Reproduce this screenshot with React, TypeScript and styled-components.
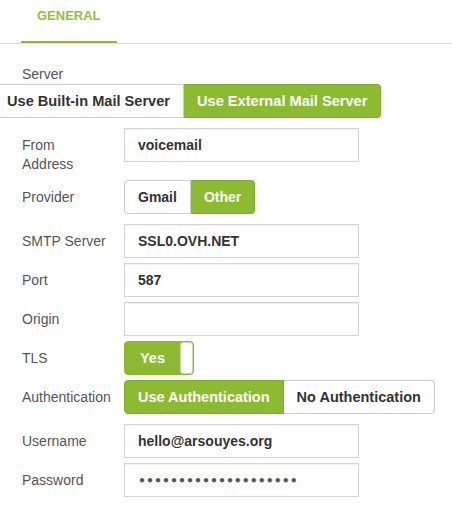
import React from "react";
import styled, { createGlobalStyle } from "styled-components";

const GREEN = "#8cbb32";
const GREEN_BORDER = "#80ad2b";

const GlobalStyle = createGlobalStyle`
  html, body {
    margin: 0;
    padding: 0;
    background: #ffffff;
    font-family: "Liberation Sans", Arial, sans-serif;
  }
  * {
    box-sizing: border-box;
  }
`;

const TabBar = styled.div`
  display: flex;
  padding-left: 21px;
  border-bottom: 1px solid #dddddd;
`;

const Tab = styled.div`
  padding: 8px 16px 17px;
  line-height: 16px;
  font-size: 13px;
  font-weight: bold;
  color: #8fc13a;
  border-bottom: 2px solid ${GREEN};
`;

const Form = styled.div`
  padding-left: 22px;
  display: flex;
  flex-direction: column;
`;

const SectionLabel = styled.div`
  margin-top: 21px;
  line-height: 19px;
  font-size: 14px;
  color: #555555;
`;

const Row = styled.div<{ $after?: number }>`
  display: grid;
  grid-template-columns: 102px 1fr;
  align-items: start;
  margin-bottom: ${(p) => p.$after ?? 5}px;
`;

const Label = styled.div`
  padding: 8px 0 1px;
  line-height: 19px;
  font-size: 14px;
  color: #555555;
`;

const Input = styled.input`
  width: 235px;
  height: 34px;
  padding: 0 13px;
  border: 1px solid #d4d4d4;
  border-radius: 0;
  box-shadow: inset 0 1px 1px rgba(0, 0, 0, 0.06);
  font-family: "Liberation Sans", Arial, sans-serif;
  font-size: 14px;
  font-weight: bold;
  color: #333333;
  outline: none;

  &[type="password"] {
    font-family: "DejaVu Sans", sans-serif;
    font-size: 12.5px;
    letter-spacing: 0;
    color: #555555;
  }
`;

const Group = styled.div<{ $shift?: number }>`
  display: flex;
  margin-left: ${(p) => p.$shift ?? 0}px;
  margin-bottom: ${(p) => (p.$shift !== undefined ? 10 : 0)}px;
`;

const Segment = styled.button<{ $active?: boolean; $size?: number }>`
  height: 34px;
  padding: 0 13px;
  font-family: "Liberation Sans", Arial, sans-serif;
  font-size: ${(p) => p.$size ?? 14.5}px;
  font-weight: bold;
  white-space: nowrap;
  cursor: pointer;
  background: ${(p) => (p.$active ? GREEN : "#ffffff")};
  color: ${(p) => (p.$active ? "#ffffff" : "#333333")};
  border: 1px solid ${(p) => (p.$active ? GREEN_BORDER : "#cccccc")};
  border-radius: 0;

  &:first-child {
    border-radius: 4px 0 0 4px;
  }
  &:last-child {
    border-radius: 0 4px 4px 0;
  }
  & + & {
    border-left: none;
  }
`;

const Switch = styled.div`
  display: flex;
  width: 70px;
  height: 34px;
  border: 1px solid ${GREEN};
  border-radius: 4px;
  overflow: hidden;
  background: ${GREEN};
`;

const SwitchLabel = styled.span`
  flex: 1;
  display: flex;
  align-items: center;
  justify-content: center;
  font-size: 14.5px;
  font-weight: bold;
  color: #ffffff;
`;

const Knob = styled.span`
  width: 13px;
  background: #ffffff;
  border: 1px solid #c9dca6;
  border-radius: 3px;
`;

const fields: { label: React.ReactNode; value: string; type?: string }[] = [
  { label: "SMTP Server", value: "SSL0.OVH.NET" },
  { label: "Port", value: "587" },
  { label: "Origin", value: "" },
];

export default function App() {
  return (
    <>
      <GlobalStyle />
      <TabBar>
        <Tab>GENERAL</Tab>
      </TabBar>
      <Form>
        <SectionLabel>Server</SectionLabel>
        <Group $shift={-29}>
          <Segment $size={14.6}>Use Built-in Mail Server</Segment>
          <Segment $size={14.6} $active>
            Use External Mail Server
          </Segment>
        </Group>

        <Row>
          <Label>
            From
            <br />
            Address
          </Label>
          <Input readOnly value="voicemail" />
        </Row>

        <Row $after={10}>
          <Label>Provider</Label>
          <Group>
            <Segment $size={14}>Gmail</Segment>
            <Segment $size={14} $active>
              Other
            </Segment>
          </Group>
        </Row>

        {fields.map((f) => (
          <Row key={f.value + String(f.label)}>
            <Label>{f.label}</Label>
            <Input readOnly value={f.value} />
          </Row>
        ))}

        <Row>
          <Label>TLS</Label>
          <Switch>
            <SwitchLabel>Yes</SwitchLabel>
            <Knob />
          </Switch>
        </Row>

        <Row $after={10}>
          <Label>Authentication</Label>
          <Group>
            <Segment $active>Use Authentication</Segment>
            <Segment>No Authentication</Segment>
          </Group>
        </Row>

        <Row>
          <Label>Username</Label>
          <Input readOnly value="hello@arsouyes.org" />
        </Row>

        <Row>
          <Label>Password</Label>
          <Input readOnly type="password" value="passwordpassword1234" />
        </Row>
      </Form>
    </>
  );
}
